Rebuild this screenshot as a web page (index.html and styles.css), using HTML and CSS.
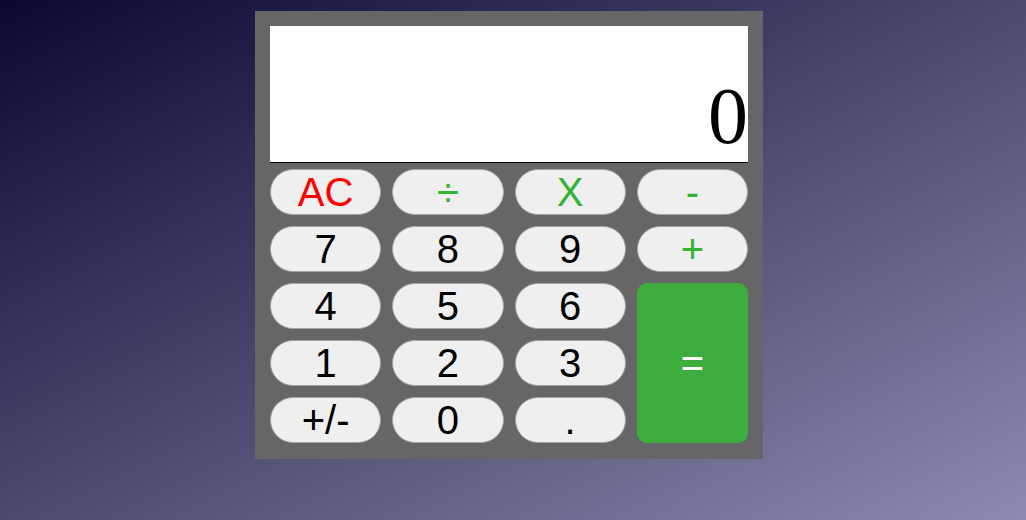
FILE: index.html
```html
<!DOCTYPE html>
<html>
<head>
<meta charset="utf-8">
<link rel="stylesheet" href="styles.css">
</head>
<body>
<div class="page">
  <div class="calc">
    <div class="display"><span class="value">0</span></div>
    <div class="keys">
      <button class="key red">AC</button>
      <button class="key op">÷</button>
      <button class="key op">X</button>
      <button class="key op">-</button>
      <button class="key">7</button>
      <button class="key">8</button>
      <button class="key">9</button>
      <button class="key op">+</button>
      <button class="key">4</button>
      <button class="key">5</button>
      <button class="key">6</button>
      <button class="key equals">=</button>
      <button class="key">1</button>
      <button class="key">2</button>
      <button class="key">3</button>
      <button class="key">+/-</button>
      <button class="key">0</button>
      <button class="key">.</button>
    </div>
  </div>
</div>
</body>
</html>
```
FILE: styles.css
```css
html, body {
  margin: 0;
  padding: 0;
}
body {
  width: 1026px;
  height: 520px;
  background: linear-gradient(to bottom right, #080833 0%, #4a4a70 50%, #8a8ab2 100%);
  font-family: "Liberation Sans", Arial, sans-serif;
}
.page {
  display: flex;
  justify-content: center;
  padding: 11px 8px 0 0;
}
.calc {
  width: 478px;
  padding: 15px 15px 16px;
  background: #666666;
  display: flex;
  flex-direction: column;
  gap: 6px;
}
.display {
  height: 136px;
  background: #ffffff;
  border-bottom: 1px solid #000;
  display: flex;
  justify-content: flex-end;
  align-items: flex-end;
}
.value {
  font-family: "Liberation Serif", "Times New Roman", serif;
  font-size: 80px;
  line-height: 92px;
  color: #000;
}
.keys {
  display: grid;
  grid-template-columns: repeat(4, 1fr);
  grid-auto-rows: 46px;
  gap: 11px;
}
.key {
  margin: 0;
  padding: 0;
  background: #efefef;
  border: 1px solid #a4a4a4;
  border-radius: 23px;
  font-family: "Liberation Sans", Arial, sans-serif;
  font-size: 40px;
  line-height: 44px;
  color: #000;
  display: flex;
  align-items: center;
  justify-content: center;
}
.red { color: #ff0000; }
.op { color: #32b432; }
.equals {
  grid-column: 4;
  grid-row: 3 / span 3;
  background: #3dad3d;
  border: none;
  border-radius: 10px;
  color: #ffffff;
}
```
